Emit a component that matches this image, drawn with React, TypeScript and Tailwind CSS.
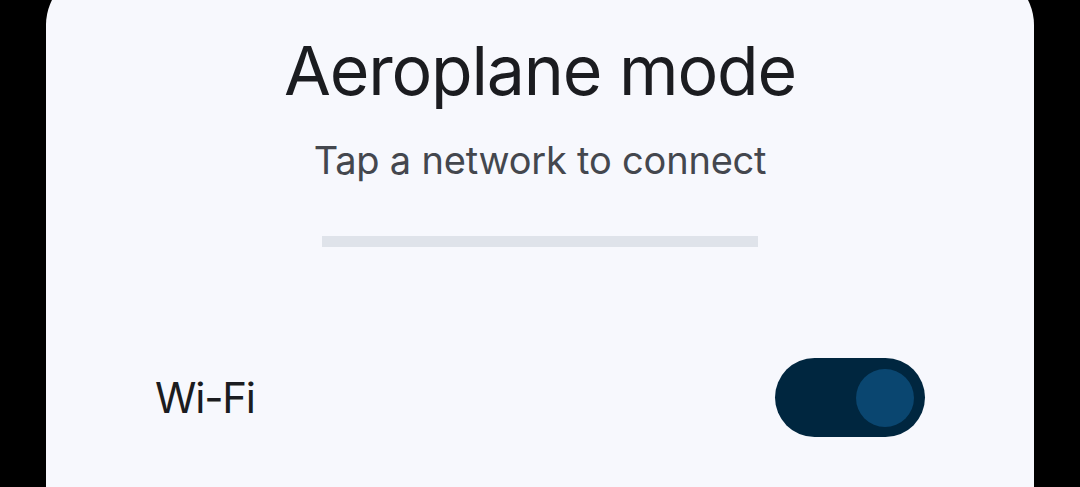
export default function App() {
  return (
    <div className="h-[487px] w-full overflow-hidden bg-black px-[46px]">
      <div className="mt-[-30px] flex h-[560px] flex-col items-center rounded-t-[55px] bg-[#f7f8fd] font-['Inter',sans-serif]">
        <h1 className="mt-[58px] text-[68px] leading-[84px] font-normal tracking-[-1.2px] text-[#1b1c20]">
          Aeroplane mode
        </h1>
        <p className="mt-[24px] text-[38px] leading-[48px] tracking-[-0.2px] text-[#44474e]">
          Tap a network to connect
        </p>
        <div className="mt-[52px] h-[11px] w-[436px] bg-[#dfe3ea]" />
        <div className="mt-[111px] flex w-full items-center justify-between px-[109px]">
          <span className="text-[42px] leading-[50px] tracking-[-1.2px] text-[#1b1c20]">Wi-Fi</span>
          <div className="flex h-[79px] w-[150px] items-center justify-end rounded-full bg-[#00263f] pr-[11px]">
            <div className="h-[58px] w-[58px] rounded-full bg-[#0a4670]" />
          </div>
        </div>
      </div>
    </div>
  );
}
